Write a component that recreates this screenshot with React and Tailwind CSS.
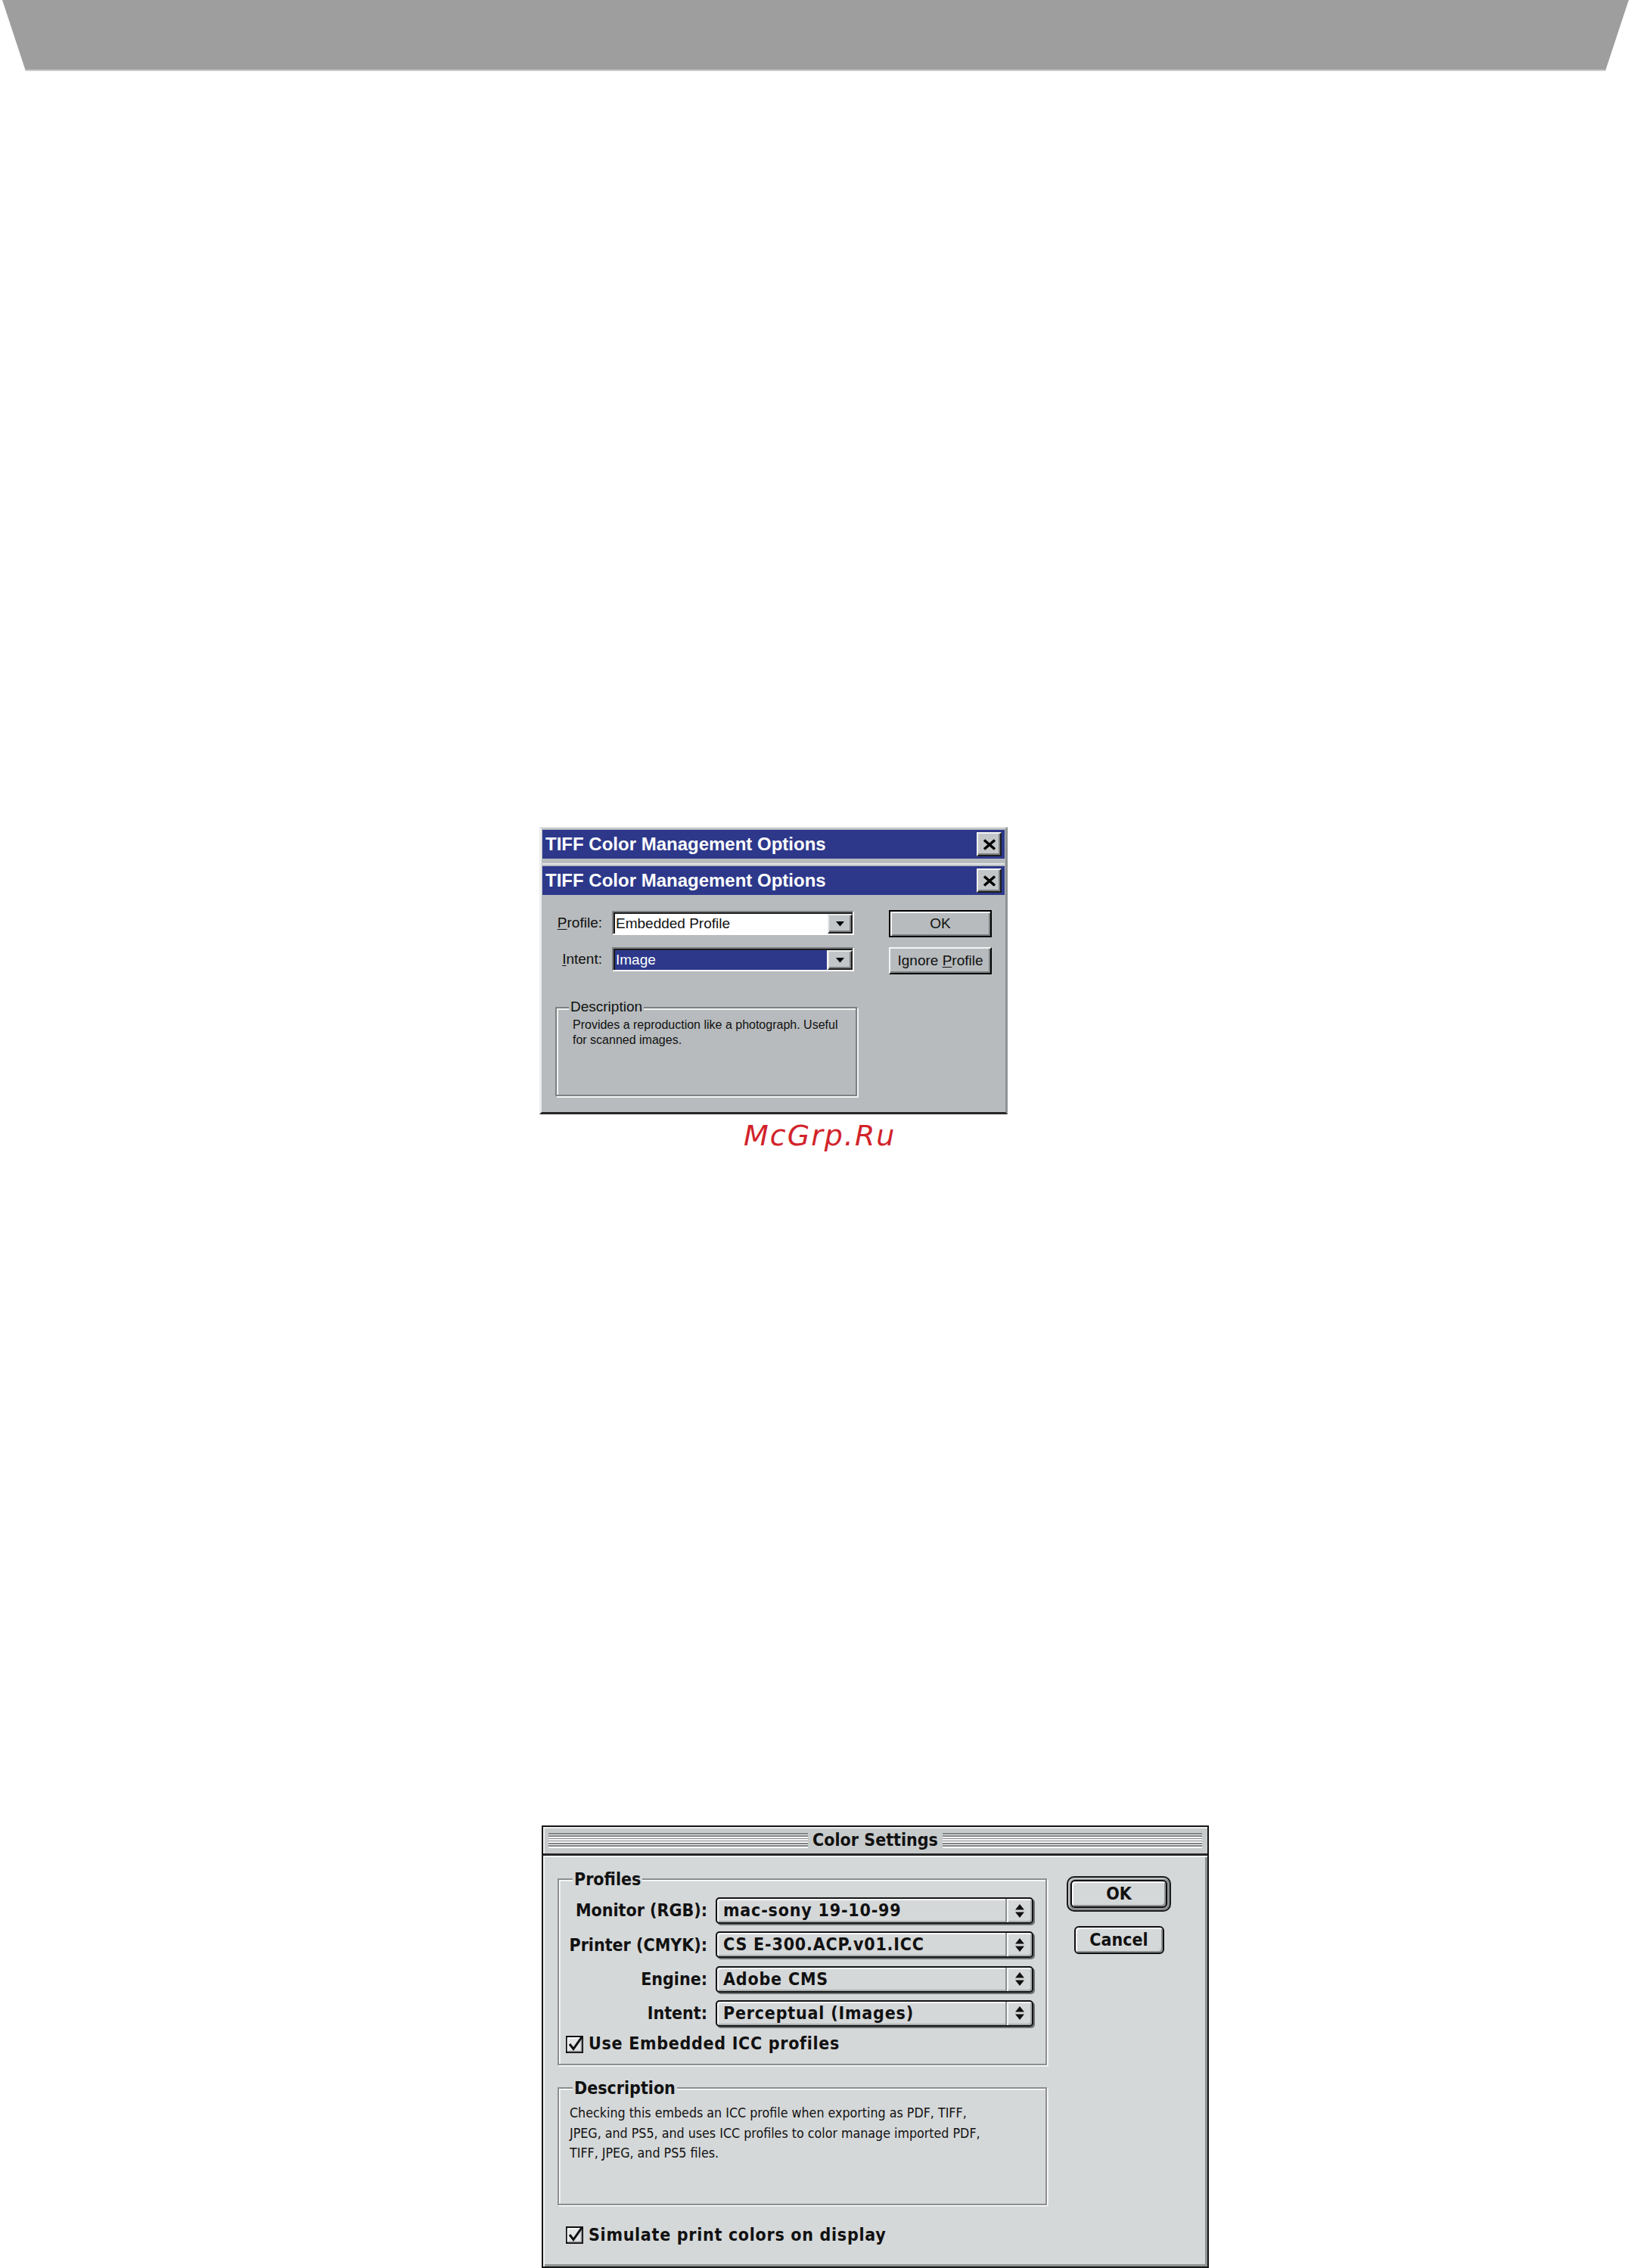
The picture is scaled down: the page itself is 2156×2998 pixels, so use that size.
import React from 'react';

// Windows-style pieces
const WinTitle = () => (
  <div className="h-[38px] bg-[#2d388b] flex items-center justify-between pl-[4px] pr-[4px]">
    <span className="text-white font-bold text-[24px] leading-none">TIFF Color Management Options</span>
    <div className="w-[33px] h-[32px] bg-[#c3c6c8] border-2 border-t-[#f2f2f2] border-l-[#f2f2f2] border-b-[#1e1e1e] border-r-[#1e1e1e] shadow-[inset_-2px_-2px_0_#7c8082] flex items-center justify-center">
      <svg width="18" height="15" viewBox="0 0 18 15">
        <path d="M2 1.5 L16 13.5 M16 1.5 L2 13.5" stroke="#000" strokeWidth="3.6" />
      </svg>
    </div>
  </div>
);

const DropBtn = () => (
  <div className="w-[33px] h-full bg-[#c3c6c8] border-2 border-t-[#e8eaea] border-l-[#e8eaea] border-b-[#1e1e1e] border-r-[#1e1e1e] shadow-[inset_-2px_-2px_0_#7c8082] flex items-center justify-center">
    <svg width="11" height="7" viewBox="0 0 11 7">
      <path d="M0 0 H11 L5.5 6.5 Z" fill="#000" />
    </svg>
  </div>
);

const Combo = ({ children, selected }) => (
  <div className="w-[320px] h-[32px] flex bg-white border-2 border-t-[#7d8183] border-l-[#7d8183] border-b-white border-r-white shadow-[inset_2px_2px_0_#1a1a1a] pt-[2px] pl-[2px]">
    <div className="flex-1 flex items-center pr-[1px]">
      {selected ? (
        <span className="h-full w-full bg-[#2d388b] text-white flex items-center pl-[1px]">{children}</span>
      ) : (
        <span className="pl-[1px]">{children}</span>
      )}
    </div>
    <DropBtn />
  </div>
);

const TiffWindow = () => (
  <div className="w-[619px] h-[380px] bg-[#b7bbbd] border-t-2 border-l-[3px] border-t-[#dcdfe0] border-l-[#eceeee] border-r-[3px] border-r-[#8e9294] border-b-[3px] border-b-[#262626] pt-[2px] px-[1px] flex flex-col font-['Liberation_Sans',Arial,sans-serif] text-[19px] text-[#111]">
    <WinTitle />
    <div className="h-[10px] pt-[6px]">
      <div className="h-[2px] bg-[#e4e6e7]" />
    </div>
    <WinTitle />
    <div className="flex pt-[21px]">
      <div className="flex flex-col">
        <div className="flex items-center h-[32px]">
          <span className="w-[80px] text-right pr-[1px]"><span className="underline underline-offset-2">P</span>rofile:</span>
          <div className="ml-[12px]"><Combo>Embedded Profile</Combo></div>
        </div>
        <div className="flex items-center h-[32px] mt-[16px]">
          <span className="w-[80px] text-right pr-[1px]"><span className="underline underline-offset-2">I</span>ntent:</span>
          <div className="ml-[12px]"><Combo selected>Image</Combo></div>
        </div>
        <div className="relative ml-[17px] mt-[47px] w-[399px] h-[118px] border-2 border-[#7d8183] shadow-[inset_2px_2px_0_#f2f2f2,2px_2px_0_#f2f2f2]">
          <span className="absolute left-[16px] top-[-13px] bg-[#b7bbbd] px-[2px] leading-[22px]">Description</span>
          <p className="pl-[21px] pt-[12px] text-[16px] leading-[20px]">
            Provides a reproduction like a photograph. Useful
            <br />
            for scanned images.
          </p>
        </div>
      </div>
      <div className="flex flex-col ml-[42px] mt-[-1px] gap-[13px]">
        <div className="w-[136px] h-[36px] border-2 border-black shadow-[inset_2px_2px_0_#f4f4f4,inset_-2px_-2px_0_#7c8082] flex items-center justify-center">OK</div>
        <div className="w-[136px] h-[36px] border-2 border-t-[#f4f4f4] border-l-[#f4f4f4] border-b-black border-r-black shadow-[inset_-2px_-2px_0_#7c8082] flex items-center justify-center">
          <span>Ignore <span className="underline underline-offset-2">P</span>rofile</span>
        </div>
      </div>
    </div>
  </div>
);

// Mac-style pieces
const Stripes = () => (
  <div className="flex-1 h-[20px] bg-[repeating-linear-gradient(to_bottom,#7f8283_0px,#7f8283_1.6px,#fbfbfb_1.6px,#fbfbfb_3.3px)]" />
);

const Popup = ({ children }) => (
  <div className="w-[420px] h-[35px] rounded-[5px] border-2 border-[#141414] bg-[#d5d8d9] shadow-[inset_2px_2px_0_#f5f6f6,inset_-2px_-2px_0_#a9acad,2px_2px_0_#6f7273] flex items-center">
    <span className="flex-1 pl-[8px] leading-none tracking-[0.8px]">{children}</span>
    <div className="w-[35px] h-full border-l-2 border-[#8d9091] shadow-[inset_2px_0_0_#f5f6f6] flex items-center justify-center">
      <svg width="14" height="20" viewBox="0 0 14 20">
        <path d="M7 1 L13 8.5 H1 Z M1 11.5 H13 L7 19 Z" fill="#111" />
      </svg>
    </div>
  </div>
);

const Check = () => (
  <svg width="24" height="24" viewBox="0 0 24 24" className="shrink-0">
    <rect x="1" y="2" width="21" height="21" fill="#e2e4e5" stroke="#111" strokeWidth="2" />
    <path d="M2.5 4 H20 M2.5 3.5 V21" stroke="#fff" strokeWidth="1.5" />
    <path d="M20.5 5 V21.5 H3" stroke="#9a9d9e" strokeWidth="1.5" fill="none" />
    <path d="M5 12 L10 18.5 L21.5 2" fill="none" stroke="#111" strokeWidth="3" />
  </svg>
);

const MacRow = ({ label, value }) => (
  <div className="flex items-center h-[35px]">
    <span className="w-[196px] text-right">{label}</span>
    <div className="ml-[11px]"><Popup>{value}</Popup></div>
  </div>
);

const MacGroup = ({ label, className, children }) => (
  <div className={`relative w-[647px] border-2 border-[#8c8f90] shadow-[inset_1.5px_1.5px_0_#fff,1.5px_1.5px_0_#fff] ${className}`}>
    <span className="absolute left-[18px] top-[-14px] bg-[#d5d8d9] px-[2px] leading-[26px]">{label}</span>
    {children}
  </div>
);

const ColorSettings = () => (
  <div className="w-[882px] h-[585px] border-2 border-[#151515] flex flex-col font-['DejaVu_Sans_Condensed','DejaVu_Sans',sans-serif] [font-stretch:condensed] font-bold text-[23px] text-[#111]">
    <div className="h-[35px] bg-[#c8cbcc] shadow-[inset_2px_2px_0_#eef0f0] flex items-center px-[7px] gap-[4px]">
      <Stripes />
      <span className="leading-none px-[2px]">Color Settings</span>
      <Stripes />
    </div>
    <div className="h-[3px] bg-[#262626]" />
    <div className="flex-1 flex bg-[#d5d8d9] shadow-[inset_2px_2px_0_#f2f3f3,inset_-3px_-3px_0_#8f9293] pl-[19px] pt-[30px]">
      <div className="flex flex-col">
        <MacGroup label="Profiles" className="h-[247px]">
          <div className="flex flex-col gap-[10.3px] pt-[23px]">
            <MacRow label="Monitor (RGB):" value="mac-sony 19-10-99" />
            <MacRow label="Printer (CMYK):" value="CS E-300.ACP.v01.ICC" />
            <MacRow label="Engine:" value="Adobe CMS" />
            <MacRow label="Intent:" value="Perceptual (Images)" />
          </div>
          <div className="flex items-center gap-[6px] pl-[9px] mt-[11px]">
            <Check />
            <span className="leading-none tracking-[0.7px]">Use Embedded ICC profiles</span>
          </div>
        </MacGroup>
        <MacGroup label="Description" className="h-[156px] mt-[29px]">
          <p className="pl-[14px] pt-[19px] font-normal text-[17.7px] leading-[26.5px]">
            Checking this embeds an ICC profile when exporting as PDF, TIFF,
            <br />
            JPEG, and PS5, and uses ICC profiles to color manage imported PDF,
            <br />
            TIFF, JPEG, and PS5 files.
          </p>
        </MacGroup>
        <div className="flex items-center gap-[6px] pl-[11px] mt-[27px]">
          <Check />
          <span className="leading-none tracking-[0.7px]">Simulate print colors on display</span>
        </div>
      </div>
      <div className="flex flex-col items-center ml-[26px] mt-[-3px] gap-[19px] w-[138px]">
        <div className="w-[138px] h-[47px] rounded-[10px] border-2 border-[#1a1a1a] bg-[#8d9091] shadow-[inset_2px_2px_0_#c2c5c6] p-[3px]">
          <div className="h-full rounded-[6px] border-2 border-[#111] bg-[#d5d8d9] shadow-[inset_2px_2px_0_#fafafa,inset_-2px_-2px_0_#8f9293] flex items-center justify-center leading-none">OK</div>
        </div>
        <div className="w-[119px] h-[37px] rounded-[6px] border-2 border-[#111] bg-[#d5d8d9] shadow-[inset_2px_2px_0_#fafafa,inset_-2px_-2px_0_#8f9293] flex items-center justify-center leading-none">Cancel</div>
      </div>
    </div>
  </div>
);

export default function App() {
  return (
    <div className="w-[2156px] h-[2998px] bg-white overflow-hidden flex flex-col">
      <div className="h-[94px] shrink-0 bg-[#9e9e9e] border-b-2 border-[#cbcbcb] [clip-path:polygon(3px_0,2153px_0,2122px_100%,34px_100%)]" />
      <div className="mt-[999px] ml-[713px]">
        <TiffWindow />
      </div>
      <p className="ml-[983px] mt-[9px] font-['DejaVu_Sans',sans-serif] italic text-[38px] leading-none tracking-[2px] text-[#d2232a]">McGrp.Ru</p>
      <div className="mt-auto ml-[716px]">
        <ColorSettings />
      </div>
    </div>
  );
}
